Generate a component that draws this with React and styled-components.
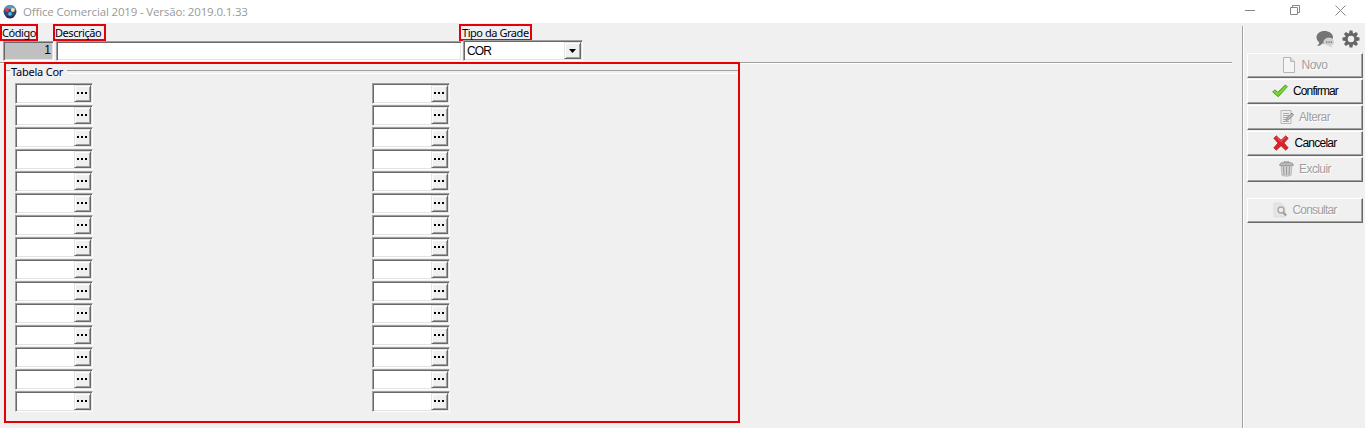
import React from "react";
import styled, { createGlobalStyle } from "styled-components";

const GlobalStyle = createGlobalStyle`
  * { box-sizing: border-box; }
  body { margin: 0; background: #f0f0f0; overflow: hidden; }
  button { font: inherit; }
`;

const Window = styled.div`
  width: 1365px;
  height: 429px;
  display: flex;
  flex-direction: column;
  background: #f0f0f0;
  border-bottom: 1px solid #fff;
  color: #000;
  font: 11px "Liberation Sans", Arial, sans-serif;
`;

const TitleBar = styled.header`
  height: 23px;
  flex: none;
  display: flex;
  align-items: center;
  background: #fff;
  padding-left: 3px;
`;

const Title = styled.h1`
  margin: 0 0 0 6px;
  flex: 1;
  font: 11.5px/22px "Open Sans", sans-serif;
  letter-spacing: -0.16px;
  color: #999;
  white-space: nowrap;
`;

const WindowControls = styled.div`
  display: flex;
  align-items: center;
  gap: 35px;
  padding-right: 19px;
  height: 20px;
  margin-bottom: 3px;
`;

const Body = styled.div`
  flex: 1;
  display: flex;
  min-height: 0;
`;

const Main = styled.main`
  width: 1242px;
  flex: none;
`;

const Header = styled.section`
  height: 39px;
  width: 1232px;
  display: flex;
  align-items: flex-start;
  padding-top: 1px;
`;

const Field = styled.div`
  width: ${(p) => p.$width}px;
  display: flex;
  flex-direction: column;
  align-items: flex-start;
`;

const Label = styled.label`
  height: 17px;
  width: ${(p) => p.$width}px;
  border: 2px solid #e3000b;
  padding-left: ${(p) => p.$pad || 0}px;
  font: 11px/14px "Noto Sans", sans-serif;
  letter-spacing: -0.45px;
  white-space: nowrap;
  color: #00001c;
`;

const sunken = `
  border: 1px solid;
  border-color: #a0a0a0 #fff #fff #a0a0a0;
  box-shadow: inset 1px 1px #696969, inset -1px -1px #e3e3e3;
`;

const raised = `
  border: 1px solid;
  border-color: #e3e3e3 #696969 #696969 #e3e3e3;
  box-shadow: inset 1px 1px #fff, inset -1px -1px #a0a0a0;
  background: #f0f0f0;
`;

const Input = styled.div`
  ${sunken}
  width: ${(p) => p.$width}px;
  height: 20px;
  margin-left: ${(p) => p.$offset}px;
  padding: 0 2px;
  background: ${(p) => (p.$readOnly ? "#c0c0c0" : "#fff")};
  text-align: right;
  font-size: 12px;
  line-height: 17px;
`;

const Combo = styled.div`
  ${sunken}
  width: 120px;
  height: 21px;
  margin: -1px 0 0 4px;
  display: flex;
  justify-content: space-between;
  padding: 1px 1px 1px 3px;
  background: #fff;
  line-height: 18px;
  font-size: 12px;
`;

const ComboText = styled.span`
  letter-spacing: -0.9px;
`;

const DropButton = styled.button`
  ${raised}
  width: 17px;
  height: 17px;
  padding: 0;
  display: grid;
  place-items: center;
`;

const Divider = styled.div`
  width: 1232px;
  height: 2px;
  border-top: 1px solid #a0a0a0;
  border-bottom: 1px solid #fff;
`;

const Frame = styled.section`
  width: 736px;
  height: 361px;
  margin: -2px 0 0 4px;
  border: 2px solid #e60000;
  position: relative;
`;

const Legend = styled.div`
  display: flex;
  align-items: center;
  height: 14px;
  margin-top: 1px;
  font: 11px/14px "Noto Sans", sans-serif;
  letter-spacing: -0.22px;
  color: #00001c;
  gap: 4px;
  white-space: nowrap;

  &::before, &::after {
    content: "";
    height: 2px;
    border-top: 1px solid #a0a0a0;
    border-bottom: 1px solid #fff;
  }
  &::before { width: 4px; margin-right: -3px; }
  &::after { flex: 1; }
`;

const Columns = styled.div`
  display: flex;
  gap: 279px;
  padding: 4px 0 0 9px;
`;

const Column = styled.div`
  display: flex;
  flex-direction: column;
  gap: 1px;
`;

const Lookup = styled.div`
  ${sunken}
  width: 78px;
  height: 21px;
  padding: 1px;
  display: flex;
  justify-content: flex-end;
  background: #fff;
`;

const LookupButton = styled.button`
  ${raised}
  width: 17px;
  height: 17px;
  padding: 0 1px 1px 0;
  display: flex;
  align-items: center;
  justify-content: center;
  gap: 2px;
`;

const Dot = styled.i`
  width: 2px;
  height: 2px;
  background: #000;
`;

const Side = styled.aside`
  flex: 1;
  margin-top: 3px;
  border-left: 1px solid #a0a0a0;
  box-shadow: inset 1px 0 #fff;
  padding: 3px 2px 0 4px;
`;

const Tools = styled.div`
  display: flex;
  justify-content: flex-end;
  align-items: center;
  gap: 7px;
  height: 20px;
  padding-right: 3px;
  margin-bottom: 4px;
`;

const Actions = styled.div`
  display: flex;
  flex-direction: column;
`;

const Action = styled.button`
  width: 116px;
  height: 25px;
  margin: 0 0 ${(p) => (p.$last ? 16 : 1)}px;
  padding: 0 0 1px;
  border: 1px solid;
  border-color: #fff #696969 #696969 #fff;
  box-shadow: inset -1px -1px #a0a0a0;
  background: #f0f0f0;
  display: flex;
  align-items: center;
  justify-content: center;
  gap: 5px;
  font-size: 12px;
  letter-spacing: ${(p) => p.$spacing}px;
  color: ${(p) => (p.$off ? "#a0a0a0" : "#000")};
  text-shadow: ${(p) => (p.$off ? "1px 1px #fff" : "none")};
`;

const Globe = () => (
  <svg width="14" height="16" viewBox="0 0 14 16">
    <circle cx="7" cy="7.500" r="6.500" fill="#34486c" />
    <path d="M1 6Q2 1 7 1T13 6L7 5Z" fill="#5b95c4" />
    <circle cx="4" cy="6" r="1.900" fill="#f0304c" />
    <circle cx="9.800" cy="6" r="2" fill="#f7e59c" />
    <circle cx="7" cy="9.800" r="1.900" fill="#48c4ea" />
    <path d="M2 11Q7 14 12 11L10.500 13.500Q7 15.500 3.500 13.500Z" fill="#2b2a63" />
  </svg>
);

const Chat = () => (
  <svg width="19" height="17" viewBox="0 0 19 17">
    <path d="M8.500 0C4 0 .5 2.600.5 6.300c0 2 1 3.800 2.700 5C3.200 13 2.300 14 1 15c2.300.2 4-.7 5.300-2.400 6 .8 10.700-2 10.700-6.300C17 2.600 13 0 8.500 0Z" fill="#757575" />
    <path d="M13 7c-3 0-5.200 1.700-5.200 4s2.200 4 5.200 3.900c.8 1.100 2.200 1.600 3.800 1.400-.8-.5-1.100-1.100-1.100-1.900 1.600-.6 2.500-1.800 2.500-3.200C18.200 8.800 16 7 13 7Z" fill="#d0d0d0" stroke="#efefef" strokeWidth=".5" />
    <path d="M10 10.500h1.300v1.300H10zM12.400 10.500h1.300v1.300h-1.300zM14.800 10.500h1.300v1.300h-1.300z" fill="#666" />
  </svg>
);

const Gear = () => (
  <svg width="18" height="18" viewBox="0 0 18 18">
    <g fill="#666">
      {[0, 45, 90, 135].map((a) => (
        <path key={a} d="M7.600 0.500h2.800l.8 4H6.800zM7.600 17.500h2.800l.8-4H6.800z" transform={`rotate(${a} 9 9)`} />
      ))}
    </g>
    <circle cx="9" cy="9" r="4.600" fill="none" stroke="#666" strokeWidth="2.700" />
  </svg>
);

const Page = () => (
  <svg width="14" height="16" viewBox="0 0 14 16">
    <path d="M1.500.5h7l4 4v11h-11z" fill="#f5f5f5" stroke="#b5b5b5" />
    <path d="M8.500.5v4h4" fill="#ddd" stroke="#b5b5b5" />
  </svg>
);

const Check = () => (
  <svg width="16" height="14" viewBox="0 0 16 14">
    <path d="M.6 8 2.800 5.800l3 2.400L13.200 1l2.200 1.600L6.300 12.800Z" fill="#66c926" stroke="#46991a" strokeWidth=".8" />
    <path d="m2.200 7.400 4 3 7.500-7.800" fill="none" stroke="#92e34c" />
  </svg>
);

const Edit = () => (
  <svg width="14" height="16" viewBox="0 0 14 16">
    <path d="M1 1.500h10v13H1z" fill="#eee" stroke="#b8b8b8" />
    <path d="M3 4.500h6M3 6.500h6M3 8.500h5M3 10.500h3M3 12.500h6" stroke="#aaa" />
    <path d="m6 11.500 1-3 5-4.500 1.600 2-4.800 4.500z" fill="#b7b7b7" stroke="#858585" strokeWidth=".8" />
  </svg>
);

const Cross = () => (
  <svg width="16" height="16" viewBox="0 0 16 16">
    <path d="M3.300.8 8 5.200 12.700.8l2.500 2.400L11 8l4.200 4.800-2.500 2.400L8 10.800l-4.700 4.400-2.500-2.400L5 8 .8 3.200Z" fill="#d9242b" stroke="#b7191e" strokeWidth=".7" />
    <path d="m3.300 2.200 4.600 4.300 4.800-4.300" fill="none" stroke="#ef6464" />
  </svg>
);

const Trash = () => (
  <svg width="15" height="16" viewBox="0 0 15 16">
    <path d="M5 2V.8h5V2" fill="none" stroke="#999" />
    <path d="M.8 4.500V3l2-1.300h9.400l2 1.300v1.500z" fill="#bbb" stroke="#909090" strokeWidth=".8" />
    <path d="m2 5.500 1 9q4.500 1.500 9 0l1-9z" fill="#d2d2d2" stroke="#b0b0b0" strokeWidth=".7" />
    <path d="m4.500 6 .5 8m2.500-8v8m3-8-.5 8" stroke="#999" />
  </svg>
);

const Search = () => (
  <svg width="14" height="16" viewBox="0 0 14 16">
    <path d="M1 1h7l4 4v10H1z" fill="#e5e5e5" stroke="#dedede" />
    <circle cx="8" cy="8" r="3" fill="#eee" stroke="#a8a8a8" strokeWidth="1.400" />
    <path d="m10.200 10.500 3 3" stroke="#999" strokeWidth="2" />
  </svg>
);

const actions = [
  { text: "Novo", Icon: Page, off: true, spacing: -0.5 },
  { text: "Confirmar", Icon: Check, spacing: -0.85 },
  { text: "Alterar", Icon: Edit, off: true, spacing: -0.6 },
  { text: "Cancelar", Icon: Cross, spacing: -0.75 },
  { text: "Excluir", Icon: Trash, off: true, last: true, spacing: -0.6 },
  { text: "Consultar", Icon: Search, off: true, spacing: -0.8 },
];

const rows = Array.from({ length: 15 }, (_, i) => i);

const LookupColumn = () => (
  <Column>
    {rows.map((i) => (
      <Lookup key={i}>
        <LookupButton><Dot /><Dot /><Dot /></LookupButton>
      </Lookup>
    ))}
  </Column>
);

export default function App() {
  return (
    <Window>
      <GlobalStyle />
      <TitleBar>
        <Globe />
        <Title>Office Comercial 2019 - Versão: 2019.0.1.33</Title>
        <WindowControls>
          <svg width="10" height="10"><path d="M0 5.500h10" stroke="#888" /></svg>
          <svg width="10" height="10" fill="none" stroke="#888"><path d="M.5 2.500h7v7h-7zM2.500 2.500v-2h7v7h-2" /></svg>
          <svg width="11" height="11"><path d="m.5.5 10 10m0-10-10 10" stroke="#888" /></svg>
        </WindowControls>
      </TitleBar>
      <Body>
        <Main>
          <Header>
            <Field $width={53}>
              <Label $width={38}>Código</Label>
              <Input $width={51} $offset={3} $readOnly>1</Input>
            </Field>
            <Field $width={406}>
              <Label $width={53}>Descrição</Label>
              <Input $width={406} $offset={3} />
            </Field>
            <Field $width={130}>
              <Label $width={73} $pad={1}>Tipo da Grade</Label>
              <Combo>
                <ComboText>COR</ComboText>
                <DropButton>
                  <svg width="7" height="4"><path d="M0 0h7L3.500 4z" /></svg>
                </DropButton>
              </Combo>
            </Field>
          </Header>
          <Divider />
          <Frame>
            <Legend>Tabela Cor</Legend>
            <Columns>
              <LookupColumn />
              <LookupColumn />
            </Columns>
          </Frame>
        </Main>
        <Side>
          <Tools><Chat /><Gear /></Tools>
          <Actions>
            {actions.map(({ text, Icon, off, last, spacing }) => (
              <Action key={text} $off={off} $last={last} $spacing={spacing}><Icon />{text}</Action>
            ))}
          </Actions>
        </Side>
      </Body>
    </Window>
  );
}
